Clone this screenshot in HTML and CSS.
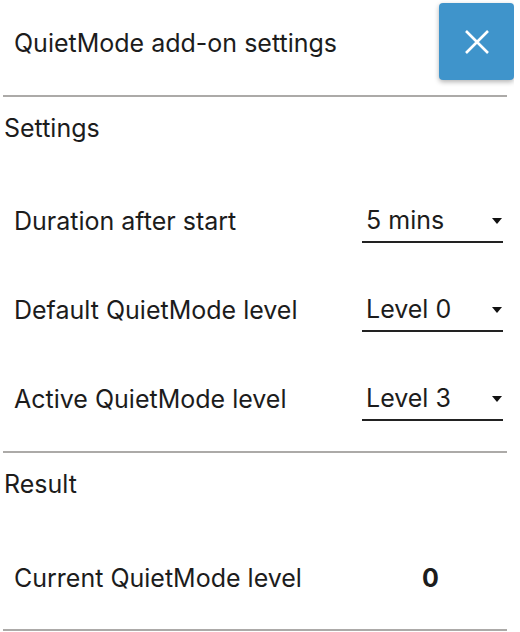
FILE: index.html
```html
<!DOCTYPE html>
<html lang="en">
<head>
    <meta charset="UTF-8">
    <title>QuietMode add-on settings</title>
    <link rel="stylesheet" href="styles.css">
</head>
<body>

    <!-- Header -->
    <div class="header">
        <div class="title">QuietMode add-on settings</div>
        <button class="close-btn" aria-label="Close">
            <svg width="24" height="24" viewBox="0 0 24 24">
                <path d="M1 1 L23 23 M23 1 L1 23" stroke="#fff" stroke-width="2.6" fill="none"/>
            </svg>
        </button>
    </div>

    <hr class="divider">

    <!-- Settings -->
    <div class="section-title">Settings</div>
    <div class="rows">
        <div class="row">
            <div class="label">Duration after start</div>
            <div class="select">5 mins<span class="caret"></span></div>
        </div>
        <div class="row">
            <div class="label">Default QuietMode level</div>
            <div class="select">Level 0<span class="caret"></span></div>
        </div>
        <div class="row">
            <div class="label">Active QuietMode level</div>
            <div class="select">Level 3<span class="caret"></span></div>
        </div>
    </div>

    <hr class="divider">

    <!-- Result -->
    <div class="section-title">Result</div>
    <div class="rows result">
        <div class="row">
            <div class="label">Current QuietMode level</div>
            <div class="value">0</div>
        </div>
    </div>

    <hr class="divider">

</body>
</html>
```

FILE: styles.css
```css
/* Global Reset */
* {
    margin: 0;
    padding: 0;
    box-sizing: border-box;
}

body {
    font-family: Inter, 'Liberation Sans', sans-serif;
    background-color: #fff;
    color: #1c1c1c;
    width: 514px;
}

/* Header */
.header {
    display: flex;
    justify-content: space-between;
    align-items: flex-start;
    height: 95px;
    padding-left: 14px;
}

.title {
    font-size: 25px;
    line-height: 30px;
    margin-top: 28px;
}

.close-btn {
    margin-top: 3px;
    width: 75px;
    height: 77px;
    border: none;
    border-radius: 4px;
    background-color: #3f94cb;
    box-shadow: 0 2px 5px rgba(0, 0, 0, 0.3);
    display: flex;
    justify-content: center;
    align-items: center;
}

/* Dividers */
.divider {
    border: none;
    height: 2px;
    background-color: #acaaa8;
    margin: 0 7px 0 3px;
}

.section-title {
    font-size: 25px;
    line-height: 30px;
    padding: 16px 0 15px 4px;
}

/* Rows */
.rows {
    padding: 18px 0 8px;
}

.row {
    display: flex;
    justify-content: space-between;
    align-items: center;
    height: 89px;
    padding-left: 14px;
    padding-right: 11px;
}

.label {
    font-size: 25px;
}

.select {
    position: relative;
    width: 141px;
    height: 42px;
    line-height: 38px;
    font-size: 25px;
    padding-left: 4px;
    border-bottom: 2px solid #222;
    margin-top: 3px;
}

.caret {
    position: absolute;
    right: 1px;
    top: 17px;
    border-left: 5px solid transparent;
    border-right: 5px solid transparent;
    border-top: 6px solid #111;
}

.result {
    padding: 19px 0 7px;
}

.value {
    width: 141px;
    padding-right: 4px;
    text-align: center;
    font-size: 25px;
    font-weight: bold;
}
```
